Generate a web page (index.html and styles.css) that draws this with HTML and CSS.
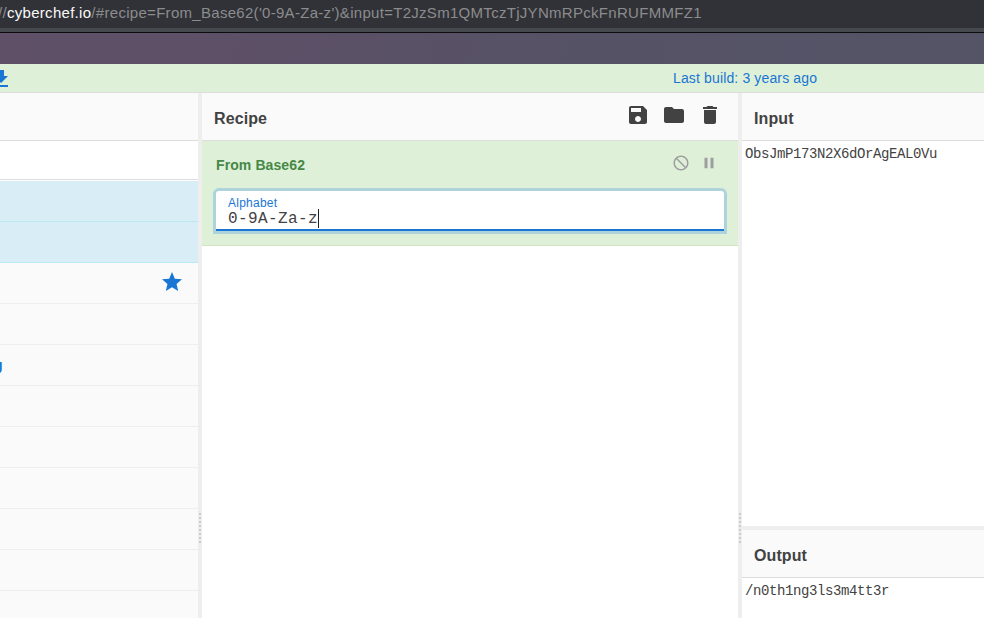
FILE: index.html
```html
<!DOCTYPE html>
<html lang="en">
<head>
<meta charset="utf-8">
<title>CyberChef</title>
<link rel="stylesheet" href="styles.css">
</head>
<body>
<div class="address"><span class="dim">//</span><span class="host">cyberchef.io</span><span class="dim path">/#recipe=From_Base62('0-9A-Za-z')&amp;input=T2JzSm1QMTczTjJYNmRPckFnRUFMMFZ1</span></div>
<div class="toolbar"></div>
<div class="banner">
  <svg class="download" viewBox="0 0 24 24"><path d="M19 9h-4V3H9v6H5l7 7 7-7zM5 18v2h14v-2H5z"/></svg>
  <a class="build">Last build: 3 years ago</a>
</div>
<main class="workspace">
  <aside class="operations">
    <div class="head"></div>
    <div class="search"></div>
    <div class="op"></div>
    <div class="op"></div>
    <div class="category favourite"><svg viewBox="0 0 24 24"><path d="M12 17.27L18.18 21l-1.64-7.03L22 9.24l-7.19-.61L12 2 9.19 8.63 2 9.24l5.46 4.73L5.82 21z"/></svg></div>
    <div class="category"></div>
    <div class="category"><span class="label">g</span></div>
    <div class="category"></div>
    <div class="category"></div>
    <div class="category"></div>
    <div class="category"></div>
    <div class="category"></div>
    <div class="category"></div>
  </aside>
  <div class="gutter"><div class="grip"></div></div>
  <section class="recipe">
    <div class="head"><span class="title">Recipe</span>
      <div class="actions">
        <svg viewBox="0 0 24 24"><path d="M17 3H5c-1.110 0-2 .9-2 2v14c0 1.100.89 2 2 2h14c1.100 0 2-.9 2-2V7l-4-4zm-5 16c-1.660 0-3-1.340-3-3s1.340-3 3-3 3 1.340 3 3-1.340 3-3 3zm3-10H5V5h10v4z"/></svg>
        <svg viewBox="0 0 24 24"><path d="M10 4H4c-1.100 0-1.990.9-1.990 2L2 18c0 1.100.9 2 2 2h16c1.100 0 2-.9 2-2V8c0-1.100-.9-2-2-2h-8l-2-2z"/></svg>
        <svg viewBox="0 0 24 24"><path d="M6 19c0 1.100.9 2 2 2h8c1.100 0 2-.9 2-2V7H6v12zM19 4h-3.500l-1-1h-5l-1 1H5v2h14V4z"/></svg>
      </div>
    </div>
    <div class="operation">
      <div class="operation-head"><span class="operation-name">From Base62</span>
        <div class="controls">
          <svg viewBox="0 0 24 24"><path transform="matrix(-1 0 0 1 24 0)" d="M12 2C6.480 2 2 6.480 2 12s4.480 10 10 10 10-4.480 10-10S17.520 2 12 2zM4 12c0-4.420 3.580-8 8-8 1.850 0 3.550.63 4.900 1.690L5.690 16.900C4.630 15.550 4 13.850 4 12zm8 8c-1.850 0-3.550-.63-4.900-1.690L18.310 7.100C19.370 8.450 20 10.150 20 12c0 4.420-3.580 8-8 8z"/></svg>
          <svg viewBox="0 0 24 24"><path d="M6 19h4V5H6v14zm8-14v14h4V5h-4z"/></svg>
        </div>
      </div>
      <div class="argument">
        <div class="argument-label">Alphabet</div>
        <div class="argument-value">0-9A-Za-z<span class="caret"></span></div>
      </div>
    </div>
  </section>
  <div class="gutter"><div class="grip"></div></div>
  <section class="io">
    <div class="input">
      <div class="head"><span class="title">Input</span></div>
      <div class="text">ObsJmP173N2X6dOrAgEAL0Vu</div>
    </div>
    <div class="row-gutter"></div>
    <div class="output">
      <div class="head"><span class="title">Output</span></div>
      <div class="text">/n0th1ng3ls3m4tt3r</div>
    </div>
  </section>
</main>
</body>
</html>
```
FILE: styles.css
```css
* { box-sizing: border-box; }
body {
  margin: 0;
  width: 984px;
  height: 618px;
  overflow: hidden;
  display: flex;
  flex-direction: column;
  font-family: "Liberation Sans", Arial, sans-serif;
  color: #424242;
  background: #fff;
}
svg { display: block; fill: currentColor; }
.address {
  height: 33px;
  flex: none;
  border-bottom: 1px solid #0c0c0d;
  background: linear-gradient(#313237 28px, #46494d 28px);
  font-size: 15px;
  line-height: 26px;
  letter-spacing: 0.295px;
  text-indent: -2px;
  white-space: nowrap;
}
.dim { color: #8c8c8e; }
.host { color: #f9f9fa; }
.toolbar {
  height: 31px;
  flex: none;
  background: linear-gradient(100deg, #5f5067 0%, #5c5067 28%, #575266 52%, #545467 100%);
}
.banner {
  height: 29px;
  flex: none;
  display: flex;
  background: #dff0d8;
  border-bottom: 1px solid #ddd;
  color: #1976d2;
}
.download { width: 24px; height: 24px; margin: 3px 0 0 -11px; }
.build { margin-left: 660px; font-size: 14px; line-height: 28px; letter-spacing: 0.14px; }
.workspace { flex: 1; min-height: 0; display: flex; }
.operations { width: 198px; overflow: hidden; }
.head {
  height: 48px;
  display: flex;
  justify-content: space-between;
  background: #fafafa;
  border-bottom: 1px solid #ddd;
}
.title { margin-left: 12px; font-size: 16px; font-weight: bold; line-height: 52px; letter-spacing: 0.1px; }
.search { height: 39px; margin-bottom: 1px; border-bottom: 1px solid #ddd; }
.op { height: 41px; background: #d9edf7; border-bottom: 1px solid #bce8f1; }
.category {
  height: 41px;
  background: #fafafa;
  border-bottom: 1px solid #eee;
  color: #1976d2;
  font-size: 14px;
  font-weight: bold;
  line-height: 40px;
}
.label { margin-left: -6px; }
.favourite { display: flex; justify-content: flex-end; padding: 7px 14px 0 0; }
.favourite svg { width: 24px; height: 24px; }
.gutter { width: 4px; background: #eee; padding: 420px 0 0 1px; }
.grip {
  width: 2px;
  height: 30px;
  background: repeating-linear-gradient(#ccc 0 2px, transparent 2px 4px);
}
.recipe { width: 536px; }
.actions { display: flex; gap: 12px; padding: 10px 16px 0 0; }
.actions svg { width: 24px; height: 24px; }
.operation {
  height: 105px;
  padding: 0 11px;
  background: #dff0d8;
  border-bottom: 1px solid #d0e4c4;
}
.operation-head { height: 47px; display: flex; justify-content: space-between; padding-left: 3px; }
.operation-name { color: #468847; font-size: 14px; font-weight: bold; line-height: 49px; letter-spacing: 0.1px; }
.controls { display: flex; gap: 10px; padding: 13px 9px 0 0; color: #9e9e9e; }
.controls svg { width: 18px; height: 18px; }
.argument {
  height: 46px;
  padding: 5px 12px 0;
  border: 3px solid #aed3db;
  border-radius: 6px 6px 0 0;
  background: linear-gradient(#fff 38px, #1976d2 38px);
}
.argument-label { color: #1976d2; font-size: 12px; line-height: 14px; letter-spacing: 0.25px; }
.argument-value {
  display: flex;
  font: 16px/18px "Liberation Mono", monospace;
  letter-spacing: 0.4px;
}
.caret { width: 1px; height: 19px; margin-top: -1px; background: #222; }
.io { flex: 1; display: flex; flex-direction: column; background: #fff; }
.input { height: 433px; }
.row-gutter { height: 4px; background: #eee; flex: none; }
.output { flex: 1; }
.text {
  padding: 5px 3px;
  font: 14px/16px "Liberation Mono", monospace;
  letter-spacing: -0.4px;
}
```
